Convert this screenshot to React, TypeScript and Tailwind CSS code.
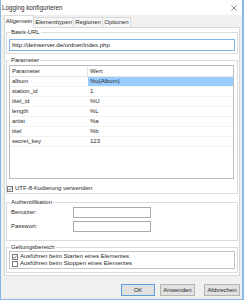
import React from "react";

function Check({ checked }: { checked?: boolean }) {
  return (
    <span className="w-[6px] h-[6px] border border-[#7a7a7a] bg-white flex items-center justify-center shrink-0">
      {checked && (
        <svg width="4" height="4" viewBox="0 0 4 4">
          <path d="M0.3 2 L1.5 3.3 L3.7 0.6" stroke="#444" strokeWidth="0.7" fill="none" />
        </svg>
      )}
    </span>
  );
}

function Group({ label, className, children }: { label: string; className?: string; children?: React.ReactNode }) {
  return (
    <div className={"border border-[#dcdcdc] flex flex-col " + (className ?? "")}>
      <div className="-mt-[4px] ml-[3px] px-[1px] bg-white w-fit h-[7px]">{label}</div>
      {children}
    </div>
  );
}

export default function App() {
  const rows: [string, string][] = [
    ["album", "%u{Album}"],
    ["station_id", "1"],
    ["titel_id", "%U"],
    ["length", "%L"],
    ["artist", "%a"],
    ["titel", "%b"],
    ["secret_key", "123"],
  ];
  return (
    <div className="w-[244px] h-[300px] flex flex-col bg-[#f0f0f0] border-l border-r-2 border-b border-[#86b9ea] text-[6px] leading-[7px] text-[#2a2a2a] font-['Segoe_UI','Liberation_Sans',Arial,sans-serif] overflow-hidden">
      {/* title bar */}
      <div className="h-[15px] bg-white flex items-center justify-between pl-[1px] pr-[5px] shrink-0">
        <span className="text-[6.3px]">Logging konfigurieren</span>
        <svg width="6" height="6" viewBox="0 0 6 6">
          <path d="M0.5 0.5 L5.5 5.5 M5.5 0.5 L0.5 5.5" stroke="#555" strokeWidth="0.7" />
        </svg>
      </div>
      {/* tabs */}
      <div className="h-[12px] flex items-end pl-[3px] shrink-0">
        <div className="relative z-10 h-[13px] -mb-[1px] w-[30px] bg-white border border-b-0 border-[#d9d9d9] flex items-center justify-center pb-[1px]">
          Allgemein
        </div>
        <div className="h-[10px] w-[40px] bg-[#f7f7f7] border border-l-0 border-b-0 border-[#d9d9d9] flex items-center justify-center">
          Elementtypen
        </div>
        <div className="h-[10px] w-[29px] bg-[#f7f7f7] border border-l-0 border-b-0 border-[#d9d9d9] flex items-center justify-center">
          Regionen
        </div>
        <div className="h-[10px] w-[28px] bg-[#f7f7f7] border border-l-0 border-b-0 border-[#d9d9d9] flex items-center justify-center">
          Optionen
        </div>
      </div>
      {/* panel */}
      <div className="ml-[3px] w-[236px] h-[249px] bg-white border border-[#d9d9d9] flex flex-col px-[1px] shrink-0">
        <Group label="Basis-URL" className="mt-[4px] h-[22px]">
          <div className="mt-[3px] mx-[2px] h-[12px] border border-[#7eb4ea] flex items-center pl-[2px] text-[#1a1a1a]">
            http://deinserver.de/ordner/index.php
          </div>
        </Group>
        <Group label="Parameter" className="mt-[6px] h-[134px]">
          <div className="mt-[1px] ml-[2px] w-[225px] h-[114px] border border-[#bcbcbc] flex flex-col">
            <div className="h-[11px] flex border-b border-[#e5e5e5] shrink-0">
              <div className="w-[78px] border-r border-[#e5e5e5] flex items-center pl-[2px]">Parameter</div>
              <div className="flex-1 flex items-center pl-[2px]">Wert</div>
            </div>
            {rows.map(([k, v], i) => (
              <div key={k} className="h-[10px] flex border-b border-[#f2f2f2] shrink-0">
                <div className="w-[78px] flex items-center pl-[2px]">{k}</div>
                <div className={"flex-1 flex items-center pl-[2px] " + (i === 0 ? "bg-[#99ccff]" : "")}>{v}</div>
              </div>
            ))}
          </div>
          <div className="mt-[6px] flex items-center gap-[2px] ml-[0px] h-[7px]">
            <Check checked />
            <span>UTF-8-Kodierung verwenden</span>
          </div>
        </Group>
        <Group label="Authentifikation" className="mt-[8px] h-[39px]">
          <div className="mt-[1px] flex items-center h-[11px]">
            <span className="ml-[4px] w-[62px]">Benutzer:</span>
            <span className="w-[78px] h-[11px] border border-[#acacac] bg-white" />
          </div>
          <div className="mt-[3px] flex items-center h-[11px]">
            <span className="ml-[4px] w-[62px]">Passwort:</span>
            <span className="w-[78px] h-[11px] border border-[#acacac] bg-white" />
          </div>
        </Group>
        <Group label="Geltungsbereich" className="mt-[6px] h-[26px]">
          <div className="mx-[2px] h-[18px] border border-[#c4c4c4] flex flex-col pt-[1px]">
            <div className="h-[7px] flex items-center gap-[2px] pl-[2px]">
              <Check checked />
              <span>Ausführen beim Starten eines Elementes</span>
            </div>
            <div className="h-[7px] flex items-center gap-[2px] pl-[2px]">
              <Check />
              <span>Ausführen beim Stoppen eines Elementes</span>
            </div>
          </div>
        </Group>
      </div>
      {/* buttons */}
      <div className="mt-[8px] flex justify-end pr-[2px] h-[12px] shrink-0">
        <div className="w-[34px] h-[12px] bg-[#e1e1e1] border border-[#5a9ee0] flex items-center justify-center">OK</div>
        <div className="ml-[5px] w-[35px] h-[12px] bg-[#e1e1e1] border border-[#b4b4b4] flex items-center justify-center">Anwenden</div>
        <div className="ml-[9px] w-[36px] h-[12px] bg-[#e1e1e1] border border-[#b4b4b4] flex items-center justify-center">Abbrechen</div>
      </div>
    </div>
  );
}
